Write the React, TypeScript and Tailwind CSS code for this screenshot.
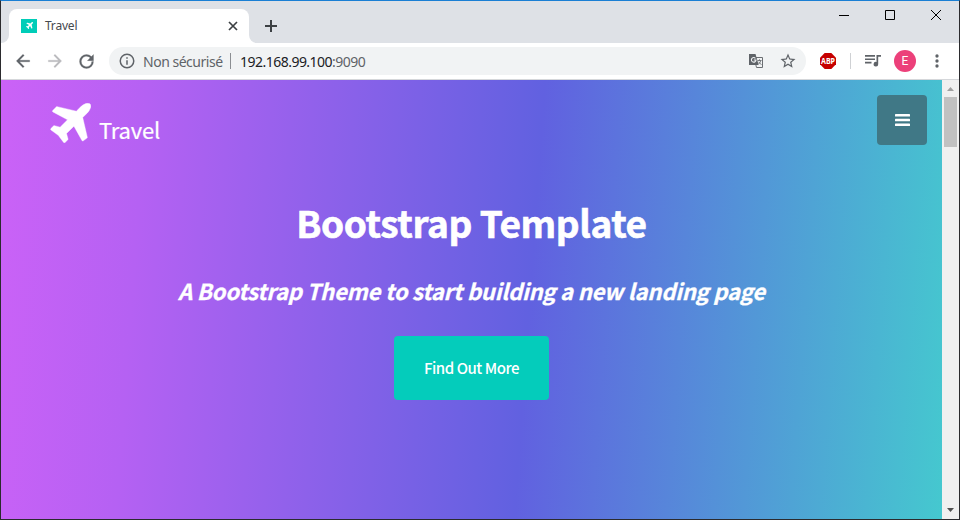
import { ReactNode } from "react";

const PLANE =
  "M1568 160q44 52 12 148t-108 172l-161 161 160 696q5 19-12 33l-128 96q-7 6-19 6-4 0-7-1-15-3-21-16l-279-508-259 259 53 194q5 17-8 31l-96 96q-9 9-23 9h-2q-15-2-24-13l-189-252-252-189q-11-7-13-23-1-13 9-25l96-97q9-9 23-9 6 0 8 1l194 53 259-259-508-279q-14-8-17-24-2-16 9-27l128-128q14-13 30-8l665 159 160-160q76-76 172-108t148 12z";

function Plane({ className }: { className: string }) {
  return (
    <svg viewBox="170 128 1430 1415" preserveAspectRatio="none" className={className} fill="currentColor">
      <path d={PLANE} stroke="currentColor" strokeWidth="14" />
    </svg>
  );
}

function Icon({ children, className = "size-5" }: { children: ReactNode; className?: string }) {
  return (
    <svg viewBox="0 0 24 24" className={`shrink-0 ${className}`} fill="currentColor">
      {children}
    </svg>
  );
}

function TabStrip() {
  return (
    <div className="flex h-[42px] bg-[#dee1e6] pt-2">
      <div className="flex h-[34px] w-2 items-end bg-white">
        <div className="h-[34px] w-2 rounded-br-lg bg-[#dee1e6]" />
      </div>
      <div className="flex h-[34px] w-[240px] items-center bg-[#dee1e6]">
        <div className="flex size-full items-center rounded-t-lg bg-white pl-3">
          <div className="mb-px flex h-[14px] w-4 items-center justify-center bg-[#00cdb8] text-white">
            <Plane className="h-[7px] w-[7px]" />
          </div>
          <span className="ml-2 text-[12px] leading-4 tracking-[-0.2px] text-[#45494e]">Travel</span>
          <svg viewBox="0 0 10 10" className="ml-auto mr-[11px] size-[10px]" stroke="#3c4043" strokeWidth="1.7">
            <path d="M1 1l8 8M9 1L1 9" />
          </svg>
        </div>
      </div>
      <div className="h-[34px] w-2 bg-white">
        <div className="h-[34px] w-2 rounded-bl-lg bg-[#dee1e6]" />
      </div>
      <svg viewBox="0 0 12 12" className="ml-2 mt-[11px] size-3" stroke="#3c4043" strokeWidth="2">
        <path d="M6 0v12M0 6h12" />
      </svg>
      <div className="ml-auto mr-[18px] flex gap-9">
        <svg viewBox="0 0 10 10" className="size-[10px]" stroke="#000">
          <path d="M0 6.5h10" />
        </svg>
        <svg viewBox="0 0 10 10" className="mt-px size-[10px]" stroke="#000" fill="none">
          <path d="M.5.5h9v9h-9z" />
        </svg>
        <svg viewBox="0 0 10 10" className="mt-px size-[10px]" stroke="#000" fill="none">
          <path d="M0 0l10 10M10 0L0 10" />
        </svg>
      </div>
    </div>
  );
}

function Toolbar() {
  return (
    <div className="flex h-[37px] items-center border-b border-[#d5d7da] bg-white pl-3 text-[#5f6368]">
      <Icon>
        <path d="M20 11H7.83l5.59-5.59L12 4l-8 8 8 8 1.41-1.41L7.83 13H20v-2z" stroke="currentColor" strokeWidth=".3" />
      </Icon>
      <Icon className="ml-3 size-5 text-[#bababd]">
        <path d="M12 4l-1.41 1.41L16.17 11H4v2h12.17l-5.58 5.59L12 20l8-8z" stroke="currentColor" strokeWidth=".3" />
      </Icon>
      <Icon className="ml-[11px] size-[21px]">
        <path d="M17.65 6.35A7.96 7.96 0 0012 4a8 8 0 108 8h-2a6 6 0 11-1.76-4.24L13 11h7V4l-2.35 2.35z" stroke="currentColor" strokeWidth=".3" />
      </Icon>
      <div className="ml-3 flex h-7 w-[697px] items-center rounded-full bg-[#f1f3f4] pl-[9px] pr-2">
        <Icon className="size-[18px]">
          <path d="M11 17h2v-6h-2v6zm1-15a10 10 0 100 20 10 10 0 000-20zm0 18a8 8 0 110-16 8 8 0 010 16zM11 9h2V7h-2v2z" />
        </Icon>
        <span className="ml-[7px] w-[81px] whitespace-nowrap text-[14px] tracking-[-0.48px]">Non sécurisé</span>
        <span className="ml-[6px] h-4 w-px bg-[#8b8e92]" />
        <span className="ml-[9px] whitespace-nowrap text-[14px] tracking-[-0.52px] text-[#202124]">
          192.168.99.100<span className="text-[#5f6368]">:9090</span>
        </span>
        <svg viewBox="0 0 14 14" className="ml-auto mr-[16px] size-[14px]">
          <path d="M5 3.5h8.5v10h-6z" fill="#f1f3f4" stroke="#6b6e72" />
          <path d="M0 0h6.5l3.2 11H0z" fill="#5f6368" />
          <path d="M6.4 4.3A2.3 2.3 0 107 6H4.8" fill="none" stroke="#f1f3f4" strokeWidth="1.1" />
          <path d="M8.5 6.5h4M10.5 5.3v1.2M11.8 6.5q-.5 2-2.2 3.5M9.6 7.8l2.8 3" fill="none" stroke="#6b6e72" strokeWidth=".9" />
        </svg>
        <Icon className="mr-px size-[18px]">
          <path d="M22 9.24l-7.19-.62L12 2 9.19 8.63 2 9.24l5.46 4.73L5.82 21 12 17.27 18.18 21l-1.63-7.03L22 9.24zM12 15.4l-3.76 2.27 1-4.28-3.32-2.88 4.38-.38L12 6.1l1.71 4.04 4.38.38-3.32 2.88 1 4.28L12 15.4z" />
        </Icon>
      </div>
      <svg viewBox="0 0 16 16" className="ml-[14px] size-4 overflow-visible">
        <path d="M4.7 0h6.6L16 4.7v6.6L11.3 16H4.7L0 11.3V4.7z" fill="#c60000" />
        <text x="8" y="11" textAnchor="middle" textLength="14" lengthAdjust="spacingAndGlyphs" fontSize="8.4" fontWeight="700" fill="#fff">
          ABP
        </text>
      </svg>
      <span className="ml-[14px] h-4 w-px bg-[#cfd1d4]" />
      <svg viewBox="0 0 16 14" className="ml-[14px] h-[14px] w-4" fill="currentColor">
        <path d="M0 1h10v1.7H0zM0 4.4h10v1.7H0zM0 7.8h6.5v1.7H0zM11.5 1H16v1.8h-2.8v7.4a2.3 2.3 0 11-1.7-2.2z" />
      </svg>
      <div className="ml-[13px] flex size-[22px] items-center justify-center rounded-full bg-[#ec407a] font-[Roboto] text-[12px] text-white">E</div>
      <Icon className="ml-[11px] size-5">
        <path d="M12 8a2 2 0 100-4 2 2 0 000 4zm0 2a2 2 0 100 4 2 2 0 000-4zm0 6a2 2 0 100 4 2 2 0 000-4z" />
      </Icon>
    </div>
  );
}

function Masthead() {
  return (
    <main className="flex w-[941px] flex-col bg-[linear-gradient(94deg,#cb62f7_0%,#b561f3_15%,#6161e0_56%,#45c8cf_100%)] font-['Noto_Sans_CJK_SC',sans-serif] text-white">
      <header className="flex h-[65px] justify-between pl-[49px] pr-[15px] pt-[15px]">
        <div className="flex">
          <Plane className="mt-2 h-10 w-[41px]" />
          <span className="ml-2 mt-[19px] text-[22px] leading-[30px] tracking-[-0.2px] [-webkit-text-stroke:0.2px_white]">Travel</span>
        </div>
        <button className="flex size-[50px] items-center justify-center rounded-[4px] bg-[#407886]">
          <svg viewBox="0 0 15 12" className="h-3 w-[15px]" fill="#fff">
            <rect width="15" height="2.5" rx=".6" />
            <rect y="4.75" width="15" height="2.5" rx=".6" />
            <rect y="9.5" width="15" height="2.5" rx=".6" />
          </svg>
        </button>
      </header>
      <section className="flex flex-col items-center pt-[53px]">
        <h1 className="whitespace-nowrap text-[37px] font-bold leading-[48px] tracking-[-0.42px] [-webkit-text-stroke:0.6px_white]">Bootstrap Template</h1>
        <h2 className="mt-[29px] whitespace-nowrap text-[22px] font-bold italic leading-[30px] tracking-[-0.19px] [-webkit-text-stroke:0.3px_white]">
          A Bootstrap Theme to start building a new landing page
        </h2>
        <button className="mt-[31px] h-16 w-[155px] rounded-[4px] bg-[#04ccbb] text-[15px] font-medium tracking-[-0.45px]">Find Out More</button>
      </section>
    </main>
  );
}

function Scrollbar() {
  return (
    <div className="flex w-[17px] flex-col items-center bg-[#f0f0f0] pb-[7px] pt-[7px]">
      <svg viewBox="0 0 7 4" className="h-1 w-[7px]" fill="#a0a0a0">
        <path d="M0 4L3.5 0 7 4z" />
      </svg>
      <div className="mt-[6px] h-[50px] w-[13px] bg-[#c1c1c1]" />
      <svg viewBox="0 0 7 4" className="mt-auto h-1 w-[7px]" fill="#505050">
        <path d="M0 0l3.5 4L7 0z" />
      </svg>
    </div>
  );
}

export default function App() {
  return (
    <div className="flex h-[520px] w-[960px] flex-col overflow-hidden border border-[#2b2b2e] border-t-[#1a7fd4] font-['Noto_Sans','Open_Sans',sans-serif]">
      <TabStrip />
      <Toolbar />
      <div className="flex min-h-0 flex-1">
        <Masthead />
        <Scrollbar />
      </div>
    </div>
  );
}
